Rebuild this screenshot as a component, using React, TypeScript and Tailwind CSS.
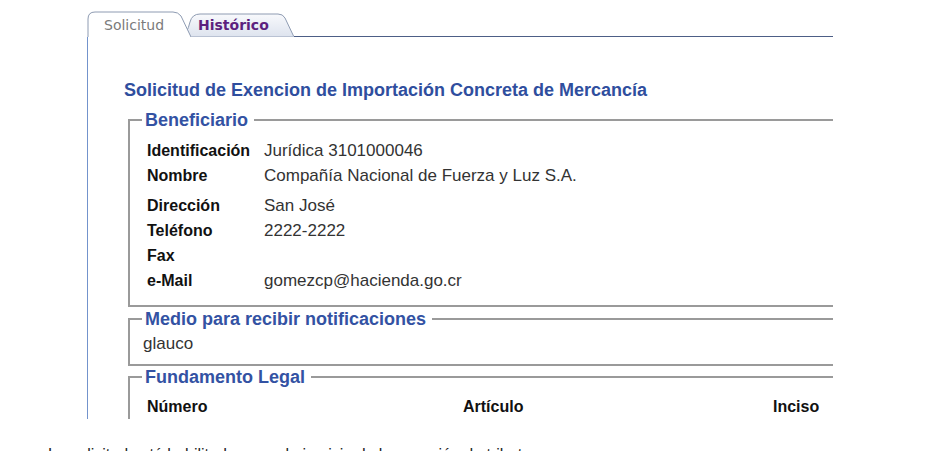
import React from "react";

const rows = [
  { label: "Identificación", value: "Jurídica 3101000046" },
  { label: "Nombre", value: "Compañía Nacional de Fuerza y Luz S.A." },
  { label: "Dirección", value: "San José", gap: true },
  { label: "Teléfono", value: "2222-2222" },
  { label: "Fax", value: "" },
  { label: "e-Mail", value: "gomezcp@hacienda.go.cr" },
];

function TabShape({ active, w, h }: { active: boolean; w: number; h: number }) {
  const d = active
    ? `M1,${h} L1,8 Q1,1 8,1 L${w - 18},1 Q${w - 13},1 ${w - 10},5 L${w},${h}`
    : `M0,${h} Q5,${h - 3} 8,9 Q10,1 18,1 L${w - 16},1 Q${w - 11},1 ${w - 9},5 L${w},${h}`;
  return (
    <svg className="absolute inset-0" width={w} height={h} viewBox={`0 0 ${w} ${h}`}>
      <defs>
        <linearGradient id="tabgrad" x1="0" y1="0" x2="0" y2="1">
          <stop offset="0" stopColor="#f8f9fc" />
          <stop offset="1" stopColor="#dde3ee" />
        </linearGradient>
      </defs>
      <path d={d + " Z"} fill={active ? "#ffffff" : "url(#tabgrad)"} stroke="none" />
      <path d={d} fill="none" stroke="#8e9bb2" strokeWidth="1" />
      {!active && <line x1="0" y1={h - 0.5} x2={w} y2={h - 0.5} stroke="#b9c2d3" />}
    </svg>
  );
}

function Legend({ children }: { children: React.ReactNode }) {
  return (
    <legend className="ml-[12px] pl-[3px] pr-[6px] text-[18px] font-bold leading-[20px] text-[#3352a3]">
      {children}
    </legend>
  );
}

export default function App() {
  return (
    <div className="w-[939px] h-[451px] overflow-hidden bg-white font-['Liberation_Sans',Arial,sans-serif]">
      <div className="ml-[87px] flex h-[419px] w-[746px] flex-col overflow-hidden">
        {/* Tabs */}
        <div className="flex h-[37px] shrink-0 items-end font-['DejaVu_Sans',Verdana,sans-serif] text-[14px]">
          <div className="relative z-10 h-[26px] w-[104px]">
            <TabShape active w={104} h={26} />
            <span className="relative block pl-[17px] pt-[6px] leading-[16px] text-[#7b7b7b]">Solicitud</span>
          </div>
          <div className="relative -ml-[9px] h-[24px] w-[112px]">
            <TabShape active={false} w={112} h={24} />
            <span className="relative block pl-[16px] pt-[4px] font-bold leading-[16px] text-[#5c1f7e]">Histórico</span>
          </div>
          <div className="h-px flex-1 bg-[#4d5e86]" />
        </div>

        {/* Content */}
        <div className="flex-1 border-l border-[#7393cc]">
          <h1 className="ml-[36px] mt-[43px] text-[18px] font-bold leading-[20px] text-[#2f4e9e]">
            Solicitud de Exencion de Importación Concreta de Mercancía
          </h1>

          <fieldset className="ml-[40px] mt-[10px] w-[730px] border-2 border-[#9a9a9a] pb-[12px]">
            <Legend>Beneficiario</Legend>
            <div className="mt-[8px] pl-[17px]">
              {rows.map((r) => (
                <div key={r.label} className={`flex h-[25px] items-center ${r.gap ? "mt-[5px]" : ""}`}>
                  <div className="w-[117px] text-[16px] font-bold text-[#111]">{r.label}</div>
                  <div className="text-[17px] text-[#333]">{r.value}</div>
                </div>
              ))}
            </div>
          </fieldset>

          <fieldset className="ml-[40px] mt-[2px] w-[730px] border-2 border-[#9a9a9a] pb-[8px]">
            <Legend>Medio para recibir notificaciones</Legend>
            <div className="mt-[3px] flex h-[24px] items-center pl-[13px] text-[17px] text-[#333]">glauco</div>
          </fieldset>

          <fieldset className="ml-[40px] mt-[1px] w-[730px] border-2 border-[#9a9a9a] pb-[8px]">
            <Legend>Fundamento Legal</Legend>
            <div className="mt-[8px] flex h-[24px] items-center pl-[17px] text-[16px] font-bold text-[#111]">
              <div className="w-[316px]">Número</div>
              <div className="w-[310px]">Artículo</div>
              <div>Inciso</div>
            </div>
          </fieldset>
        </div>
      </div>

      <p className="ml-[48px] mt-[26px] whitespace-nowrap text-[16px] leading-[20px] text-[#222]">
        La solicitud está habilitada para el ejercicio de la exención de tributos
      </p>
    </div>
  );
}
